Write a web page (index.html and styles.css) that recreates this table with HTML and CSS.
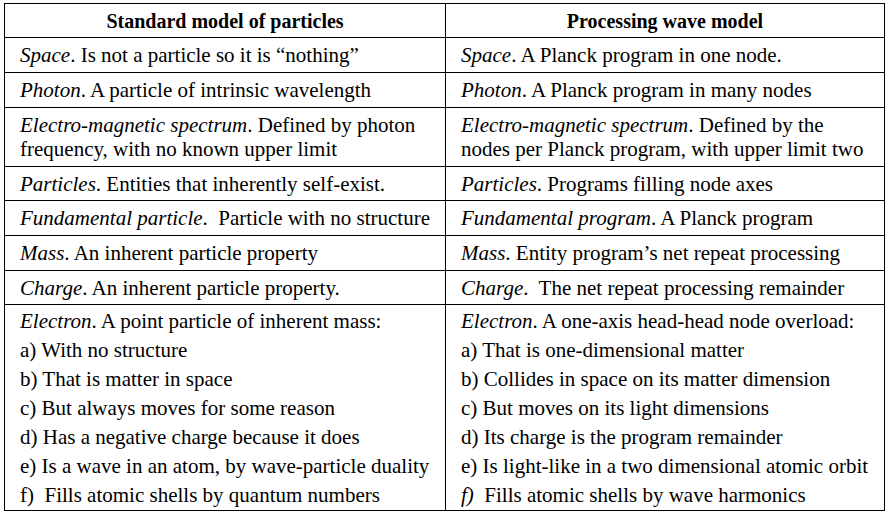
FILE: index.html
```html
<!DOCTYPE html>
<html>
<head>
<meta charset="utf-8">
<link rel="stylesheet" href="styles.css">
</head>
<body>
<div class="cmp">
  <div class="cell head">Standard model of particles</div>
  <div class="cell head">Processing wave model</div>

  <div class="cell"><i>Space</i>. Is not a particle so it is “nothing”</div>
  <div class="cell"><i>Space</i>. A Planck program in one node.</div>

  <div class="cell"><i>Photon</i>. A particle of intrinsic wavelength</div>
  <div class="cell"><i>Photon</i>. A Planck program in many nodes</div>

  <div class="cell"><i>Electro-magnetic spectrum</i>. Defined by photon<br>frequency, with no known upper limit</div>
  <div class="cell"><i>Electro-magnetic spectrum</i>. Defined by the<br>nodes per Planck program, with upper limit two</div>

  <div class="cell"><i>Particles</i>. Entities that inherently self-exist.</div>
  <div class="cell"><i>Particles</i>. Programs filling node axes</div>

  <div class="cell"><i>Fundamental particle</i>.&nbsp; Particle with no structure</div>
  <div class="cell"><i>Fundamental program</i>. A Planck program</div>

  <div class="cell"><i>Mass</i>. An inherent particle property</div>
  <div class="cell"><i>Mass</i>. Entity program’s net repeat processing</div>

  <div class="cell"><i>Charge</i>. An inherent particle property.</div>
  <div class="cell"><i>Charge</i>.&nbsp; The net repeat processing remainder</div>

  <div class="cell list">
    <div><i>Electron</i>. A point particle of inherent mass:</div>
    <div>a) With no structure</div>
    <div>b) That is matter in space</div>
    <div>c) But always moves for some reason</div>
    <div>d) Has a negative charge because it does</div>
    <div>e) Is a wave in an atom, by wave-particle duality</div>
    <div>f)&nbsp; Fills atomic shells by quantum numbers</div>
  </div>
  <div class="cell list">
    <div><i>Electron</i>. A one-axis head-head node overload:</div>
    <div>a) That is one-dimensional matter</div>
    <div>b) Collides in space on its matter dimension</div>
    <div>c) But moves on its light dimensions</div>
    <div>d) Its charge is the program remainder</div>
    <div>e) Is light-like in a two dimensional atomic orbit</div>
    <div><i>f)</i>&nbsp; Fills atomic shells by wave harmonics</div>
  </div>
</div>
</body>
</html>
```
FILE: styles.css
```css
html, body {
  margin: 0;
  padding: 0;
  background: #ffffff;
  color: #000;
}
body {
  font-family: "Liberation Serif", serif;
}
.cmp {
  display: grid;
  grid-template-columns: 441px 439px;
  grid-template-rows: 34px 35px 35px 59px 34px 35px 35px 34px 206px;
  width: max-content;
  margin: 3px 0 0 4px;
  border-top: 1px solid #000;
  border-left: 1px solid #000;
  font-family: "Liberation Serif", serif;
  font-size: 21px;
}
.cell {
  box-sizing: border-box;
  border-right: 1px solid #000;
  border-bottom: 1px solid #000;
  padding: 5px 15px 0;
  line-height: 24px;
  white-space: nowrap;
  overflow: hidden;
}
.cell i {
  font-style: italic;
}
.head {
  padding-top: 5px;
  text-align: center;
  font-weight: bold;
  font-size: 20px;
}
.list {
  padding-top: 2px;
  line-height: 29px;
}
```
